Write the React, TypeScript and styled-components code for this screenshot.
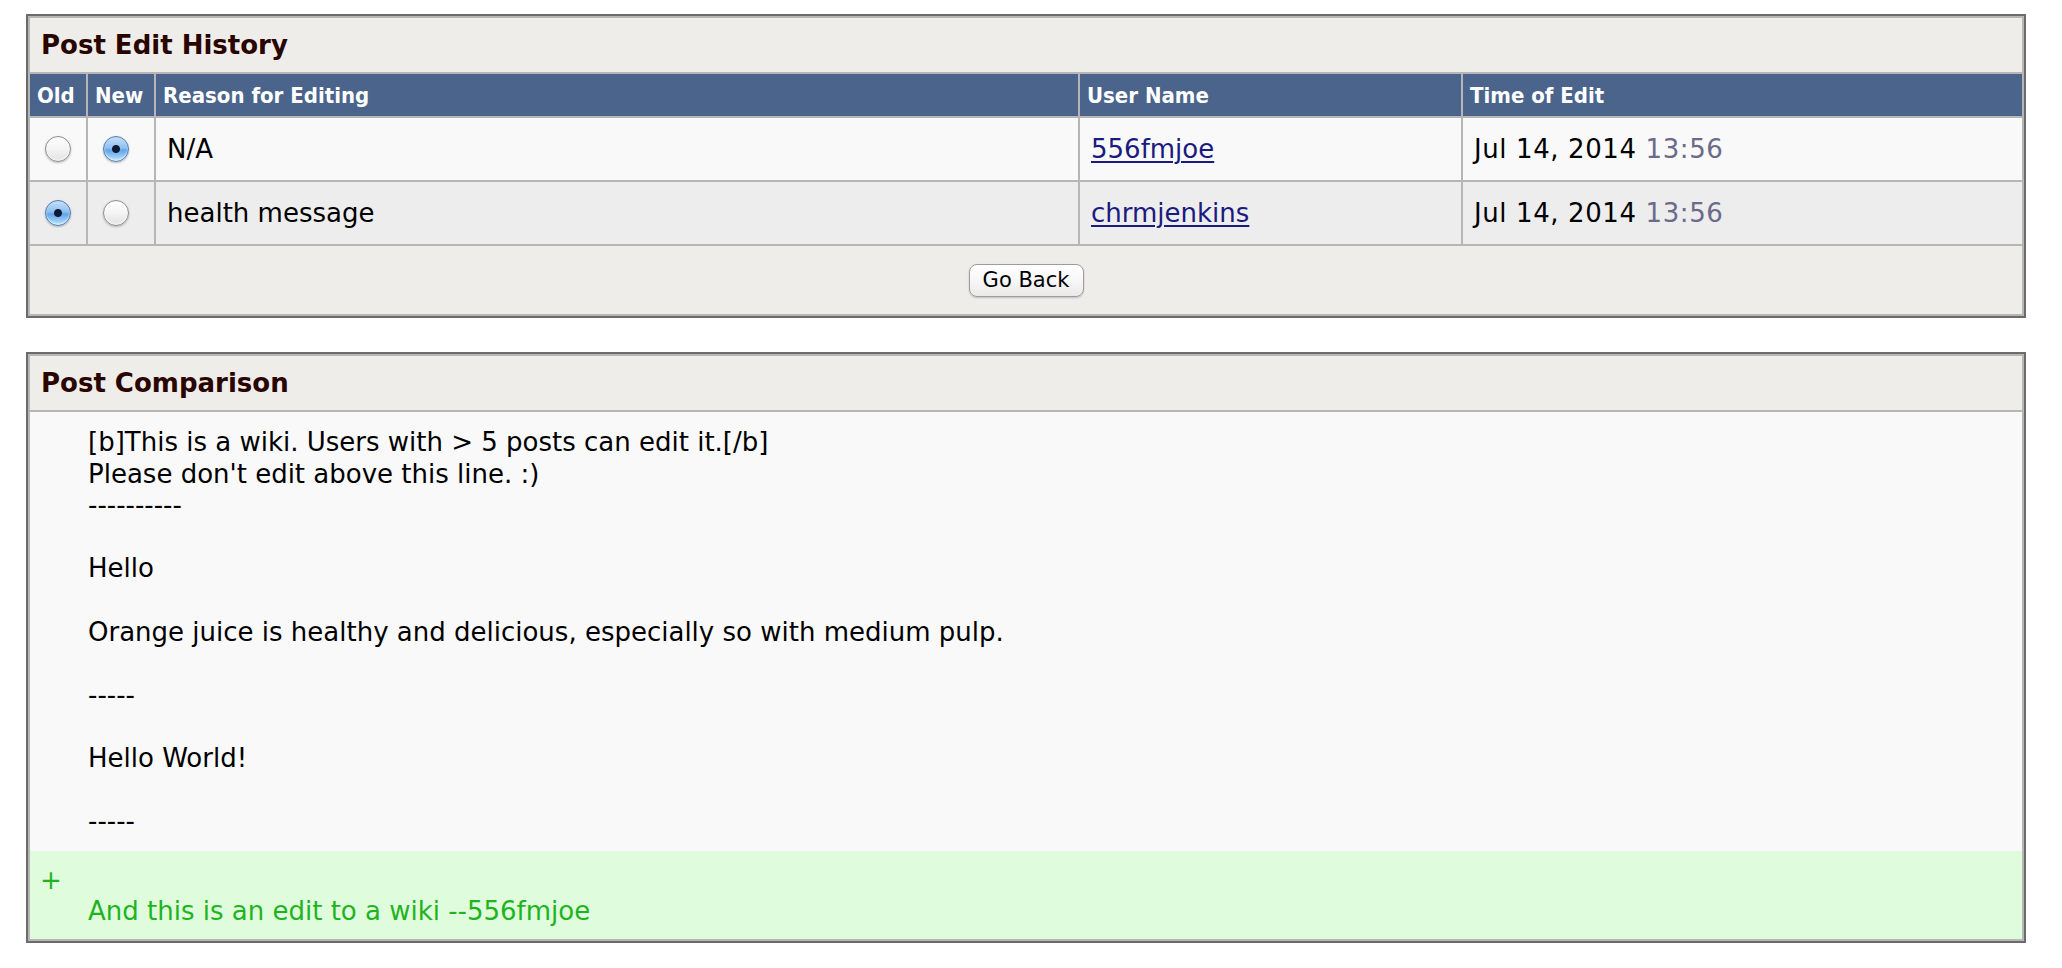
import React from "react";
import styled, { createGlobalStyle } from "styled-components";

const GlobalStyle = createGlobalStyle`
  * {
    box-sizing: border-box;
  }
  body {
    margin: 0;
    background: #ffffff;
    font-family: "DejaVu Sans", Verdana, sans-serif;
    color: #000000;
  }
`;

const Page = styled.div`
  display: flex;
  flex-direction: column;
  gap: 34px;
  padding: 14px 0 0 26px;
`;

const Panel = styled.table`
  width: 2000px;
  table-layout: fixed;
  border: 2px solid #6b6b6b;
  border-spacing: 2px;
  background: #b6b6b6;
`;

const Col = styled.col<{ $w?: number }>`
  width: ${(p) => (p.$w ? `${p.$w}px` : "auto")};
`;

const TitleCell = styled.th`
  height: 54px;
  padding: 0 11px;
  background: #eeede9;
  color: #2a0500;
  text-align: left;
  font-family: "DejaVu Sans", Verdana, sans-serif;
  font-size: 26px;
  font-weight: bold;
`;

const HeadCell = styled.th`
  height: 42px;
  padding: 0 7px;
  background: #4a648c;
  color: #ffffff;
  text-align: left;
  font-family: "DejaVu Sans Condensed", "DejaVu Sans", sans-serif;
  font-stretch: condensed;
  font-size: 22px;
  font-weight: bold;
  white-space: nowrap;
`;

const Cell = styled.td<{ $alt?: boolean; $radio?: boolean; $spaced?: boolean }>`
  height: 62px;
  padding: ${(p) => (p.$radio ? "0 0 0 15px" : "0 11px")};
  background: ${(p) => (p.$alt ? "#ededed" : "#f9f9f9")};
  font-size: 26px;
  letter-spacing: ${(p) => (p.$spaced ? "0.6px" : "normal")};
  vertical-align: middle;
  white-space: nowrap;
`;

const Radio = styled.input`
  appearance: none;
  display: block;
  width: 26px;
  height: 26px;
  margin: 0;
  border-radius: 50%;
  border: 1px solid #8c8c8c;
  background: linear-gradient(#ffffff 0%, #f4f4f4 50%, #e2e2e2 100%);
  box-shadow: 0 1px 2px rgba(0, 0, 0, 0.25), inset 0 -1px 2px rgba(255, 255, 255, 0.9);

  &:checked {
    border-color: #4f7aae;
    background: radial-gradient(circle at center, #0d1a30 0 3.5px, transparent 4.5px),
      linear-gradient(#c5e0fa 0%, #8cc0f0 45%, #62a5ea 55%, #b8e2fd 100%);
  }
`;

const UserLink = styled.a`
  color: #1a1a80;
  text-decoration: underline;
  text-decoration-thickness: 2px;
  text-underline-offset: 3px;
`;

const Clock = styled.span`
  color: #6b6a8b;
`;

const FooterCell = styled.td`
  height: 68px;
  background: #eeede9;
  text-align: center;
  vertical-align: middle;
`;

const Button = styled.button`
  width: 115px;
  height: 33px;
  padding: 0;
  border: 1px solid #9c9c9c;
  border-radius: 8px;
  background: linear-gradient(#ffffff 0%, #f7f7f7 50%, #e9e9e9 100%);
  box-shadow: 0 1px 2px rgba(0, 0, 0, 0.2);
  font-family: "DejaVu Sans", sans-serif;
  font-size: 21px;
  color: #000000;
`;

const ContentCell = styled.td`
  padding: 0;
  background: #f9f9f9;
`;

const DiffBlock = styled.div<{ $added?: boolean }>`
  display: grid;
  grid-template-columns: 48px 1fr;
  padding: ${(p) => (p.$added ? "14px 0 11px 10px" : "15px 0 13px 10px")};
  background: ${(p) => (p.$added ? "#dffcdc" : "#f9f9f9")};
  color: ${(p) => (p.$added ? "#1fb41f" : "#000000")};
  font-size: 26px;
  line-height: 31.6px;
`;

const DiffText = styled.div`
  white-space: pre-wrap;
`;

const history = [
  { old: false, neu: true, reason: "N/A", user: "556fmjoe", date: "Jul 14, 2014", time: "13:56" },
  { old: true, neu: false, reason: "health message", user: "chrmjenkins", date: "Jul 14, 2014", time: "13:56" },
];

const unchanged = `[b]This is a wiki. Users with > 5 posts can edit it.[/b]
Please don't edit above this line. :)
----------

Hello

Orange juice is healthy and delicious, especially so with medium pulp.

-----

Hello World!

-----`;

const added = `
And this is an edit to a wiki --556fmjoe`;

export default function App() {
  return (
    <>
      <GlobalStyle />
      <Page>
        <Panel>
          <colgroup>
            <Col $w={56} />
            <Col $w={66} />
            <Col $w={922} />
            <Col $w={381} />
            <Col />
          </colgroup>
          <thead>
            <tr>
              <TitleCell colSpan={5}>Post Edit History</TitleCell>
            </tr>
            <tr>
              <HeadCell>Old</HeadCell>
              <HeadCell>New</HeadCell>
              <HeadCell>Reason for Editing</HeadCell>
              <HeadCell>User Name</HeadCell>
              <HeadCell>Time of Edit</HeadCell>
            </tr>
          </thead>
          <tbody>
            {history.map((h, i) => (
              <tr key={i}>
                <Cell $alt={i % 2 === 1} $radio>
                  <Radio type="radio" name="oldid" defaultChecked={h.old} />
                </Cell>
                <Cell $alt={i % 2 === 1} $radio>
                  <Radio type="radio" name="newid" defaultChecked={h.neu} />
                </Cell>
                <Cell $alt={i % 2 === 1}>{h.reason}</Cell>
                <Cell $alt={i % 2 === 1}>
                  <UserLink href="#">{h.user}</UserLink>
                </Cell>
                <Cell $alt={i % 2 === 1} $spaced>
                  {h.date} <Clock>{h.time}</Clock>
                </Cell>
              </tr>
            ))}
            <tr>
              <FooterCell colSpan={5}>
                <Button type="button">Go Back</Button>
              </FooterCell>
            </tr>
          </tbody>
        </Panel>

        <Panel>
          <thead>
            <tr>
              <TitleCell>Post Comparison</TitleCell>
            </tr>
          </thead>
          <tbody>
            <tr>
              <ContentCell>
                <DiffBlock>
                  <span />
                  <DiffText>{unchanged}</DiffText>
                </DiffBlock>
                <DiffBlock $added>
                  <span>+</span>
                  <DiffText>{added}</DiffText>
                </DiffBlock>
              </ContentCell>
            </tr>
          </tbody>
        </Panel>
      </Page>
    </>
  );
}
